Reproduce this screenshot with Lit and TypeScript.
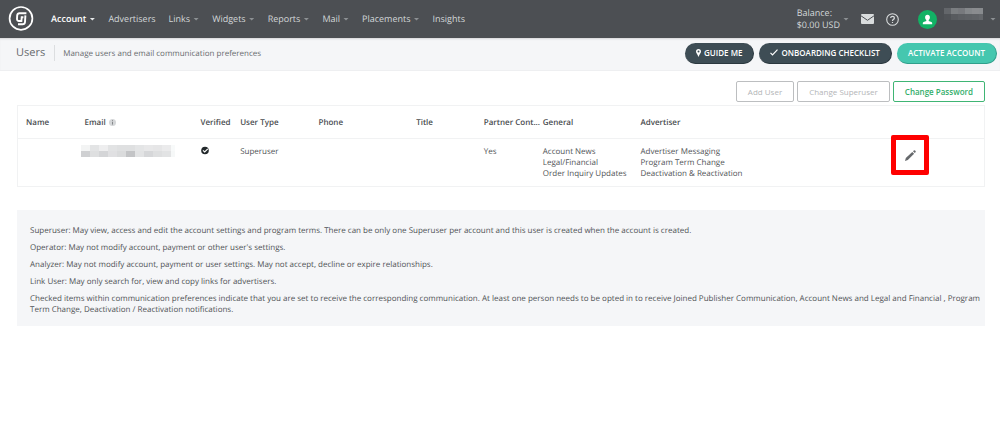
import { LitElement, html, css, svg } from "lit";
import { customElement } from "lit/decorators.js";
import { classMap } from "lit/directives/class-map.js";

interface NavItem {
  label: string;
  menu?: boolean;
  active?: boolean;
}

const NAV: NavItem[] = [
  { label: "Account", menu: true, active: true },
  { label: "Advertisers" },
  { label: "Links", menu: true },
  { label: "Widgets", menu: true },
  { label: "Reports", menu: true },
  { label: "Mail", menu: true },
  { label: "Placements", menu: true },
  { label: "Insights" },
];

const ROLES = [
  "Superuser: May view, access and edit the account settings and program terms. There can be only one Superuser per account and this user is created when the account is created.",
  "Operator: May not modify account, payment or other user's settings.",
  "Analyzer: May not modify account, payment or user settings. May not accept, decline or expire relationships.",
  "Link User: May only search for, view and copy links for advertisers.",
  "Checked items within communication preferences indicate that you are set to receive the corresponding communication. At least one person needs to be opted in to receive Joined Publisher Communication, Account News and Legal and Financial , Program Term Change, Deactivation / Reactivation notifications.",
];

// Tiles of a pixelated block, one colour per cell, row by row.
const mosaic = (rows: string[][], w: number, h: number) =>
  rows.map((row, y) =>
    row.map((c, x) => svg`<rect x=${x * w} y=${y * h} width=${w} height=${h} fill=${c}></rect>`)
  );

const EMAIL_TILES = [
  ["#f3f4f4", "#e3e4e5", "#eeeeef", "#e2e3e4", "#dfe0e1", "#dfe0e1", "#e4e5e6", "#e8e8e9", "#e6e6e7", "#ebebec", "#f8fafa"],
  ["#cfd0d2", "#dedfe0", "#d4d5d7", "#e0e0e2", "#dadbdc", "#c3c4c6", "#e2e3e4", "#d6d7d9", "#dedfe0", "#e2e3e4", "#f6f8f8"],
];

const NAME_TILES = [
  ["#63666a", "#7b7e81", "#77797d", "#85888b", "#8a8c8f", "#888b8e"],
  ["#505357", "#585b5f", "#5c5f63", "#5e6165", "#606367", "#64676b"],
];

@customElement("app-root")
export class AppRoot extends LitElement {
  static styles = css`
    :host {
      display: block;
      min-height: 100vh;
      background: #fff;
      color: #505356;
      font: 8px/11px "Open Sans", "Noto Sans", sans-serif;
      text-rendering: geometricPrecision;
    }
    * { box-sizing: border-box; }
    svg { display: block; flex: none; }
    a { color: inherit; text-decoration: none; }
    button { font: inherit; cursor: pointer; margin: 0; }

    .top {
      display: flex;
      align-items: center;
      height: 38px;
      padding: 0 4px 0 8px;
      background: #4c4f53;
      color: #d3d7d9;
      font-size: 9px;
      line-height: 12px;
    }
    .nav {
      display: flex;
      gap: 13px;
      margin-left: 17px;
    }
    .nav a {
      display: flex;
      align-items: center;
      gap: 3px;
    }
    .nav .active { color: #fff; font-weight: 600; }
    .caret {
      width: 6px;
      height: 3px;
      flex: none;
      background: #8c9093;
      clip-path: polygon(0 0, 100% 0, 50% 100%);
    }
    .active .caret { background: #e6e8e9; }
    .tools {
      display: flex;
      align-items: center;
      margin-left: auto;
    }
    .balance {
      display: flex;
      align-items: center;
      gap: 3px;
      margin-right: 12px;
    }
    .mail { margin-right: 12px; }
    .help { margin-right: 19px; }
    .who {
      display: flex;
      align-items: center;
      gap: 7px;
    }

    .bar {
      display: flex;
      align-items: center;
      height: 33px;
      padding: 0 3px 2px 16px;
      background: #f5f6f8;
      border-bottom: 1px solid #eeeff1;
      box-shadow: inset 0 2px 2px -1px #d5d6d8;
      color: #686b6e;
    }
    h1 {
      margin: 0;
      padding-right: 9px;
      border-right: 1px solid #dcdee0;
      font-size: 11px;
      line-height: 16px;
      font-weight: 400;
    }
    .bar p { margin: 1px 0 0 8px; }
    .pills {
      display: flex;
      gap: 5px;
      margin-left: auto;
    }
    .pill {
      display: flex;
      align-items: center;
      gap: 3px;
      height: 21px;
      padding: 0 11px;
      border: 1px solid #2b383f;
      border-width: 0 1px 1px 0;
      border-radius: 11px;
      background: #3e4d55;
      color: #fff;
      font-weight: 600;
    }
    .pill.go { background: #45c7af; border-color: #2f9f8b; }

    main { padding: 10px 15px 0 17px; }
    .actions {
      display: flex;
      justify-content: flex-end;
      gap: 3px;
      margin-bottom: 3px;
    }
    .action {
      height: 21px;
      padding: 0 11px;
      border: 1px solid #bcbec0;
      border-radius: 2px;
      background: #fff;
      color: #b3b5b7;
    }
    .action.main { border-color: #3fb574; color: #33ae6a; font-weight: 600; }

    table {
      width: 100%;
      border-collapse: collapse;
      table-layout: fixed;
      border: 1px solid #f1f2f3;
    }
    th, td {
      padding: 0 0 0 8px;
      text-align: left;
      vertical-align: top;
      white-space: nowrap;
    }
    th {
      height: 33px;
      vertical-align: middle;
      font-weight: 600;
      color: #4a4d50;
      border-bottom: 1px solid #f1f2f3;
    }
    td { height: 48px; padding-top: 7px; }
    .name, .partner { width: 6.1%; }
    .email { width: 12%; }
    .verified { width: 4.1%; }
    .type { width: 8.1%; }
    .phone, .general { width: 10.1%; }
    .title { width: 7%; }
    .edit { width: 15.3%; }
    .with-icon { display: flex; align-items: center; gap: 3px; }
    .blurred { margin: -1px 0 0 -3px; }
    .edit-cell { padding: 7px 0 0; position: relative; }
    .pencil {
      display: block;
      margin: 0 auto;
      padding: 4px;
      border: 0;
      background: none;
    }
    .mark {
      position: absolute;
      left: 50%;
      top: -4px;
      width: 38px;
      height: 40px;
      margin-left: -19px;
      border: 5px solid #fe0000;
      border-radius: 2px;
      pointer-events: none;
    }

    .roles {
      margin-top: 23px;
      padding: 15px 2px 11px 13px;
      background: #f5f6f8;
    }
    .roles p { margin: 0 0 6px; }
    .roles p:last-child { margin: 0; }
  `;

  render() {
    return html`
      <header class="top">
        <a href="#" aria-label="Home">
          <svg width="26" height="26" viewBox="0 0 26 26" fill="none" stroke="#fff">
            <circle cx="13" cy="12.4" r="11.4" stroke-width="1.7"></circle>
            <path d="M18.4 7.2H11.6Q9.4 7.2 9.2 9.4L9 12.8Q8.9 15 11 15H13.4L13.7 11.2H15.4" stroke-width="1.9"></path>
            <path d="M17.4 9.4L17 16Q16.8 18.3 14.6 18.3H10" stroke-width="1.9"></path>
          </svg>
        </a>
        <nav class="nav">
          ${NAV.map(
            (n) => html`<a href="#" class=${classMap({ active: !!n.active })}
              >${n.label}${n.menu ? html`<span class="caret"></span>` : ""}</a
            >`
          )}
        </nav>
        <div class="tools">
          <a class="balance" href="#"><span>Balance:<br />$0.00 USD</span><span class="caret"></span></a>
          <a class="mail" href="#" aria-label="Mail">
            <svg width="13" height="10" viewBox="0 0 13 10">
              <rect width="13" height="10" rx="1" fill="#d9dcdd"></rect>
              <path d="M0 1.8L6.5 6.3L13 1.8" fill="none" stroke="#4c4f53"></path>
            </svg>
          </a>
          <a class="help" href="#" aria-label="Help">
            <svg width="13" height="13" viewBox="0 0 13 13" fill="none" stroke="#d9dcdd">
              <circle cx="6.5" cy="6.5" r="5.8" stroke-width="1.1"></circle>
              <path d="M4.6 5Q4.8 3.3 6.5 3.3Q8.4 3.3 8.4 4.9Q8.4 5.8 7.3 6.4Q6.5 6.9 6.5 7.9M6.5 8.9V10" stroke-width="1.2"></path>
            </svg>
          </a>
          <a class="who" href="#" aria-label="Profile">
            <svg width="19" height="19" viewBox="0 0 19 19">
              <circle cx="9.5" cy="9.5" r="9.5" fill="#12b265"></circle>
              <path
                d="M9.5 4.7C11 4.7 11.9 5.8 11.9 7.3C11.9 8.6 11.3 9.5 10.7 10V11L13.4 12Q14.2 12.4 14.2 13.3V14.3H4.8V13.3Q4.8 12.4 5.6 12L8.3 11V10C7.7 9.5 7.1 8.6 7.1 7.3C7.1 5.8 8 4.7 9.5 4.7Z"
                fill="#fff"
              ></path>
            </svg>
            <svg width="39" height="22" viewBox="0 0 39 22">${mosaic(NAME_TILES, 7, 6)}</svg>
            <span class="caret"></span>
          </a>
        </div>
      </header>

      <section class="bar">
        <h1>Users</h1>
        <p>Manage users and email communication preferences</p>
        <div class="pills">
          <button class="pill">
            <svg width="5" height="8" viewBox="0 0 5 8">
              <path fill="#fff" fill-rule="evenodd" d="M2.5 0A2.5 2.5 0 0 1 5 2.5C5 4 3.4 5.4 2.5 8C1.6 5.4 0 4 0 2.5A2.5 2.5 0 0 1 2.5 0ZM2.5 1.6A1 1 0 1 0 2.5 3.6A1 1 0 1 0 2.5 1.6Z"></path>
            </svg>
            GUIDE ME
          </button>
          <button class="pill">
            <svg width="8" height="7" viewBox="0 0 8 7">
              <path d="M0.5 3.9L2.5 5.9L7.5 0.6" fill="none" stroke="#fff" stroke-width="1.2"></path>
            </svg>
            ONBOARDING CHECKLIST
          </button>
          <button class="pill go">ACTIVATE ACCOUNT</button>
        </div>
      </section>

      <main>
        <div class="actions">
          <button class="action">Add User</button>
          <button class="action">Change Superuser</button>
          <button class="action main">Change Password</button>
        </div>
        <table>
          <thead>
            <tr>
              <th class="name">Name</th>
              <th class="email">
                <span class="with-icon">
                  Email
                  <svg width="7" height="7" viewBox="0 0 7 7">
                    <circle cx="3.5" cy="3.5" r="3.5" fill="#d4d6d8"></circle>
                    <path d="M3.5 1.2V2.1M3.5 2.8V5.6" stroke="#85888b"></path>
                  </svg>
                </span>
              </th>
              <th class="verified">Verified</th>
              <th class="type">User Type</th>
              <th class="phone">Phone</th>
              <th class="title">Title</th>
              <th class="partner">Partner Cont...</th>
              <th class="general">General</th>
              <th>Advertiser</th>
              <th class="edit"></th>
            </tr>
          </thead>
          <tbody>
            <tr>
              <td></td>
              <td>
                <svg class="blurred" width="94" height="13" viewBox="0 0 94 13">
                  ${mosaic(EMAIL_TILES, 9, 6)}
                </svg>
              </td>
              <td>
                <svg width="9" height="9" viewBox="0 0 9 9">
                  <circle cx="4" cy="4.5" r="3.8" fill="#23292c"></circle>
                  <path d="M2 4.3L3.7 6L6.8 2.9" fill="none" stroke="#fff" stroke-width="1.2"></path>
                </svg>
              </td>
              <td>Superuser</td>
              <td></td>
              <td></td>
              <td>Yes</td>
              <td>Account News<br />Legal/Financial<br />Order Inquiry Updates</td>
              <td>Advertiser Messaging<br />Program Term Change<br />Deactivation &amp; Reactivation</td>
              <td class="edit-cell">
                <button class="pencil" aria-label="Edit user">
                  <svg width="11" height="11" viewBox="0 0 11 11" fill="#66696c">
                    <path d="M0 11L0.8 8.1L7.3 1.9L9.1 3.7L2.8 10.1Z"></path>
                    <path d="M8 1.3L8.8 0.5Q9.4 0 10 0.5L10.6 1.1Q11 1.7 10.5 2.3L9.8 3Z"></path>
                  </svg>
                </button>
                <span class="mark"></span>
              </td>
            </tr>
          </tbody>
        </table>
        <section class="roles">${ROLES.map((t) => html`<p>${t}</p>`)}</section>
      </main>
    `;
  }
}
